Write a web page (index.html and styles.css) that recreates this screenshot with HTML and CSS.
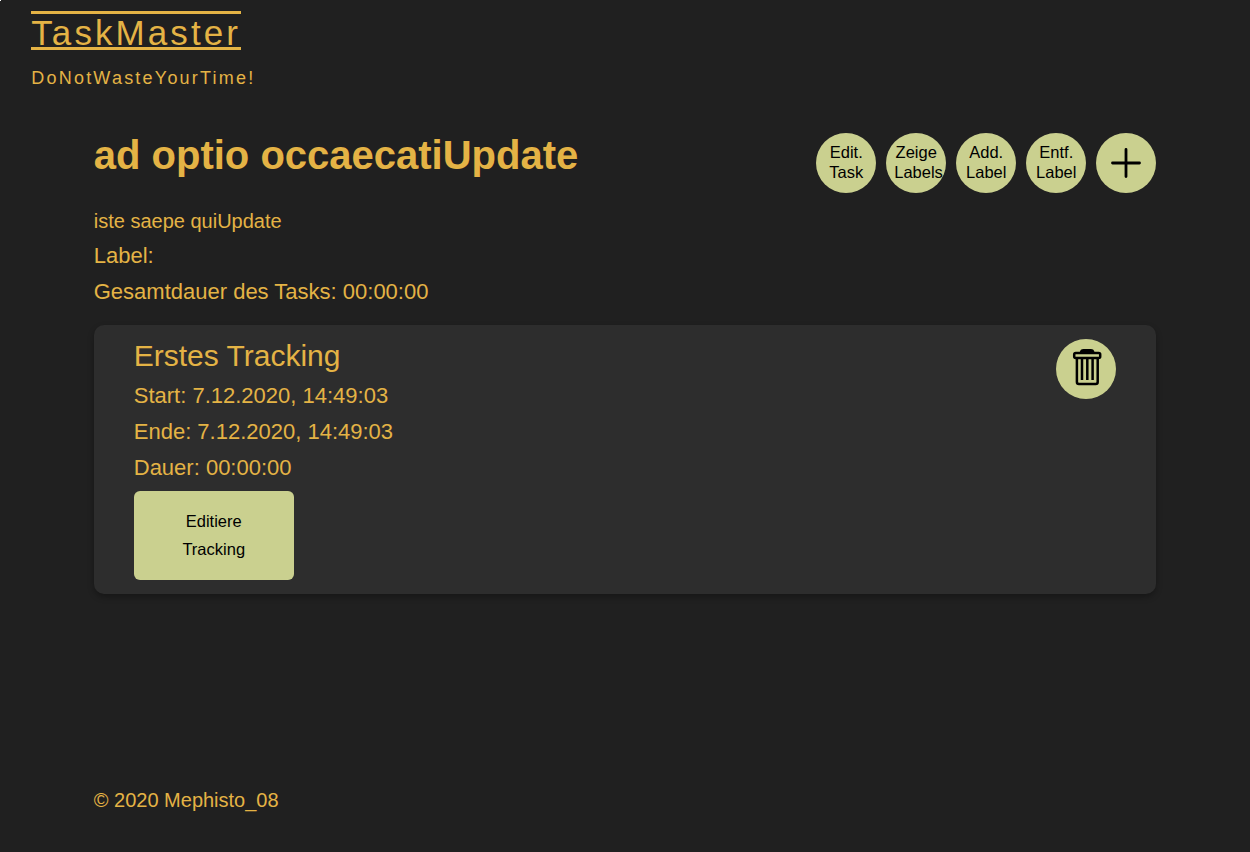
FILE: index.html
```html
<!DOCTYPE html>
<html lang="de">
<head>
<meta charset="utf-8">
<title>TaskMaster</title>
<link rel="stylesheet" href="styles.css">
</head>
<body>
<header class="header">
  <div class="brand">TaskMaster</div>
  <div class="slogan">DoNotWasteYourTime!</div>
</header>
<main class="main">
  <div class="task-head">
    <h1 class="task-title">ad optio occaecatiUpdate</h1>
    <div class="actions">
      <button class="round">Edit. Task</button>
      <button class="round">Zeige Labels</button>
      <button class="round">Add. Label</button>
      <button class="round">Entf. Label</button>
      <button class="round round-icon" aria-label="Neues Tracking">
        <svg width="30" height="30" viewBox="0 0 30 30"><path d="M15 1.5V28.5M1.5 15H28.5" fill="none" stroke="#000" stroke-width="2.8" stroke-linecap="round"/></svg>
      </button>
    </div>
  </div>
  <p class="description">iste saepe quiUpdate</p>
  <p class="line">Label:</p>
  <p class="line">Gesamtdauer des Tasks: 00:00:00</p>
  <section class="card">
    <div class="card-body">
      <h2 class="card-title">Erstes Tracking</h2>
      <p class="line">Start: 7.12.2020, 14:49:03</p>
      <p class="line">Ende: 7.12.2020, 14:49:03</p>
      <p class="line">Dauer: 00:00:00</p>
      <button class="edit">Editiere Tracking</button>
    </div>
    <button class="round round-icon trash" aria-label="Löschen">
      <svg width="30" height="38" viewBox="0 0 30 38" fill="none" stroke="#000" stroke-width="2.5">
        <path d="M9 4.500Q9.300 2.200 11.500 2.200H18.800Q21 2.200 21.300 4.500Z" fill="#000"/>
        <rect x="2.200" y="5" width="26" height="5" rx="1.500"/>
        <path d="M4.900 10V34Q4.900 36 6.900 36H23.700Q25.700 36 25.700 34V10"/>
        <path d="M10 10V32M15.300 10V32M20.600 10V32"/>
      </svg>
    </button>
  </section>
</main>
<footer class="footer">© 2020 Mephisto_08</footer>
</body>
</html>
```
FILE: styles.css
```css
* { box-sizing: border-box; }
body {
  margin: 0;
  min-height: 852px;
  display: flex;
  flex-direction: column;
  background: #202020;
  color: #e4b345;
  font-family: "Liberation Sans", Arial, sans-serif;
  font-size: 20px;
}
body::before {
  content: "";
  position: absolute;
  top: 0;
  left: 0;
  width: 1px;
  height: 1px;
  background: #fff;
}
p, h1, h2 { margin: 0; }
.header { padding: 11px 2.5% 0; }
.brand {
  width: max-content;
  height: 39px;
  border-top: 3px solid;
  border-bottom: 3px solid;
  font-size: 35px;
  line-height: 38px;
  letter-spacing: 3.08px;
}
.slogan {
  margin-top: 18px;
  font-size: 18px;
  line-height: 21px;
  letter-spacing: 2.22px;
}
.main { width: 85%; margin: 44px auto 0; }
.task-head { display: flex; justify-content: space-between; height: 70px; }
.task-title { font-size: 40px; line-height: 45px; }
.actions { display: flex; gap: 10px; }
.round {
  width: 60px;
  height: 60px;
  padding: 0 8px 2px;
  border: 0;
  border-radius: 50%;
  background: #cad08f;
  color: #000;
  font: 16.5px/20px "Liberation Sans", Arial, sans-serif;
}
.round-icon {
  display: flex;
  align-items: center;
  justify-content: center;
  padding: 0;
}
.description { line-height: 36px; margin-bottom: -1px; }
.line { font-size: 22px; line-height: 36px; }
.card {
  display: flex;
  justify-content: space-between;
  height: 269px;
  margin-top: 15px;
  padding: 13px 40px 14px;
  border-radius: 10px;
  background: #2d2d2d;
  box-shadow: 0 3px 6px rgba(0, 0, 0, 0.3);
}
.card-title { font-size: 30px; font-weight: 400; line-height: 36px; margin-bottom: 4px; }
.edit {
  display: block;
  width: 160px;
  height: 89px;
  margin-top: 5px;
  padding: 0 40px 2px;
  border: 0;
  border-radius: 6px;
  background: #cad08f;
  color: #000;
  font: 16.5px/28px "Liberation Sans", Arial, sans-serif;
}
.trash { margin-top: 1px; padding: 0 0 4px 2px; }
.footer { width: 85%; margin: auto auto 40px; line-height: 24px; }
```
